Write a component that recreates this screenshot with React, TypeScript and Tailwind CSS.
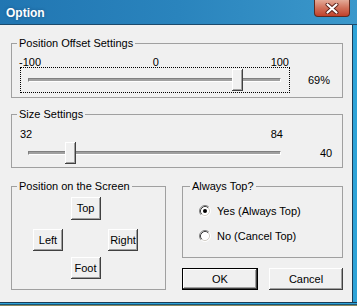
import React from 'react';

const bevel =
  'shadow-[inset_-1px_-1px_0_#404040,inset_1px_1px_0_#ffffff,inset_-2px_-2px_0_#a0a0a0]';
const groove =
  'h-[4px] border border-t-[#808080] border-l-[#808080] border-b-white border-r-white bg-[#a0a0a0]';

function Group({
  label,
  className,
  legendClass = 'ml-[5px]',
  children,
}: {
  label: string;
  className: string;
  legendClass?: string;
  children: React.ReactNode;
}) {
  return (
    <fieldset className={`border border-[#a0a0a0] ${className}`}>
      <legend className={`px-[2px] leading-[13px] ${legendClass}`}>{label}</legend>
      {children}
    </fieldset>
  );
}

function Btn({ label, className }: { label: string; className: string }) {
  return (
    <button className={`flex items-center justify-center bg-[#f0f0f0] leading-none ${bevel} ${className}`}>
      {label}
    </button>
  );
}

function Radio({ checked, label, className }: { checked: boolean; label: string; className: string }) {
  return (
    <div className={`flex h-[16px] items-center ${className}`}>
      <svg width="12" height="12" viewBox="0 0 12 12" className="ml-[16px]">
        <circle cx="6" cy="6" r="4.5" fill="#ffffff" />
        <path d="M2.11 9.89 A5.5 5.5 0 0 1 9.89 2.11" fill="none" stroke="#808080" strokeWidth="1" />
        <path d="M2.82 9.18 A4.5 4.5 0 0 1 9.18 2.82" fill="none" stroke="#404040" strokeWidth="1" />
        <path d="M9.89 2.11 A5.5 5.5 0 0 1 2.11 9.89" fill="none" stroke="#ffffff" strokeWidth="1" />
        <path d="M9.18 2.82 A4.5 4.5 0 0 1 2.82 9.18" fill="none" stroke="#d4d0c8" strokeWidth="1" />
        {checked && <circle cx="6" cy="6" r="2" fill="#000000" />}
      </svg>
      <span className="ml-[6px]">{label}</span>
    </div>
  );
}

function TitleBar() {
  return (
    <div className="flex h-[25px] items-start justify-between border-b border-[#1c4a6c] bg-gradient-to-r from-[#2176b2] via-[#2a84bd] to-[#3b98cb]">
      <span className="ml-[6px] mt-[5px] font-bold text-[12px] leading-[16px] text-white [text-shadow:0_0_3px_rgba(20,60,100,0.6)]">
        Option
      </span>
      <div className="mr-[7px] flex h-[17px] w-[36px] items-center justify-center rounded-b-[4px] border border-t-0 border-[#5e2a20] bg-gradient-to-b from-[#e3aa98] via-[#d0705a] to-[#c0402a]">
        <svg width="14" height="11" viewBox="0 0 14 11">
          <path d="M2.5 1.5 L11.5 9.5 M11.5 1.5 L2.5 9.5" stroke="#5a2018" strokeWidth="4" strokeLinecap="round" />
          <path d="M2.5 1.5 L11.5 9.5 M11.5 1.5 L2.5 9.5" stroke="#ffffff" strokeWidth="2.2" strokeLinecap="round" />
        </svg>
      </div>
    </div>
  );
}

export default function App() {
  return (
    <div className="flex h-[306px] w-[357px] flex-col bg-[#2ea3d8] font-['Liberation_Sans',Arial,sans-serif] text-[11px] text-black">
      <TitleBar />
      <div className="flex h-[277px]">
        <div className="w-[352px] bg-[#f0f0f0] pt-[12px]">
          <Group label="Position Offset Settings" className="ml-[11px] w-[332px] pb-[4px] pt-[6px]">
            <div className="ml-[7px] flex h-[12px] w-[270px] items-center justify-between leading-[12px]">
              <span>-100</span>
              <span>0</span>
              <span>100</span>
            </div>
            <div className="-mt-[1px] flex items-center">
              <div className="relative ml-[8px] flex h-[26px] w-[270px] items-center border border-dotted border-black pl-[7px] pr-[8px]">
                <div className={`flex-1 ${groove}`} />
                <div className={`absolute left-[211px] top-[1px] h-[22px] w-[11px] bg-[#f0f0f0] ${bevel}`} />
              </div>
              <span className="ml-[18px]">69%</span>
            </div>
          </Group>

          <Group label="Size Settings" className="ml-[11px] mt-[10px] w-[332px] pb-[3px] pt-[7px]">
            <div className="ml-[8px] flex h-[12px] w-[263px] items-center justify-between leading-[12px]">
              <span>32</span>
              <span>84</span>
            </div>
            <div className="mt-[2px] flex h-[22px] items-center">
              <div className="relative ml-[16px] flex h-[22px] w-[253px] items-center">
                <div className={`w-full ${groove}`} />
                <div className={`absolute left-[37px] top-0 h-[22px] w-[11px] bg-[#f0f0f0] ${bevel}`} />
              </div>
              <span className="ml-[39px]">40</span>
            </div>
          </Group>

          <div className="ml-[11px] mt-[12px] flex items-start">
            <Group label="Position on the Screen" className="w-[155px] pb-[10px]">
              <div className="ml-[21px] mt-[4px] flex w-[105px] flex-col items-center">
                <Btn label="Top" className="h-[23px] w-[30px]" />
                <div className="mt-[9px] flex w-full justify-between">
                  <Btn label="Left" className="h-[22px] w-[30px]" />
                  <Btn label="Right" className="h-[22px] w-[30px]" />
                </div>
                <Btn label="Foot" className="mt-[6px] h-[22px] w-[30px]" />
              </div>
            </Group>

            <div className="ml-[16px] flex w-[161px] flex-col">
              <Group label="Always Top?" legendClass="ml-[7px]" className="w-[161px] pb-[13px]">
                <Radio checked label="Yes (Always Top)" className="mt-[10px]" />
                <Radio checked={false} label="No (Cancel Top)" className="mt-[9px]" />
              </Group>
              <div className="mt-[10px] flex justify-between">
                <button className={`flex h-[22px] w-[76px] items-center justify-center border border-black bg-[#f0f0f0] ${bevel}`}>
                  OK
                </button>
                <Btn label="Cancel" className="h-[22px] w-[74px]" />
              </div>
            </div>
          </div>
        </div>
        <div className="flex-1 border-l border-[#1b3d58] bg-[#2ea3d8]" />
      </div>
      <div className="flex h-[4px] flex-col">
        <div className="h-[1px] bg-[#1b3d58]" />
        <div className="h-[1px] bg-[#2ea3d8]" />
        <div className="h-[1px] bg-[#1a5474]" />
        <div className="h-[1px] bg-[#8a8a60]" />
      </div>
    </div>
  );
}
